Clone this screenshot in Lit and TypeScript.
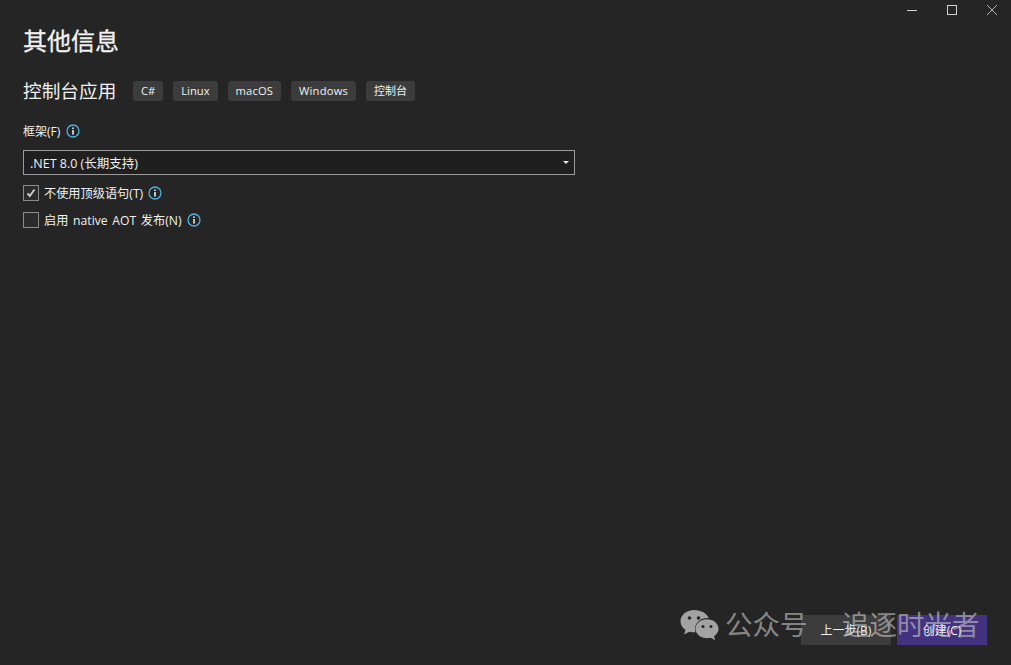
import { LitElement, html, css, svg } from "lit";
import { customElement } from "lit/decorators.js";

const info = html`<svg class="info" width="14" height="14" viewBox="0 0 14 14"><circle cx="7" cy="7" r="6" fill="none" stroke="#4fb3df" stroke-width="1.3"/><rect x="6.2" y="6" width="1.6" height="4.6" fill="#d8eef8"/><rect x="6.2" y="3.4" width="1.6" height="1.6" fill="#d8eef8"/></svg>`;

@customElement("app-root")
export class AppRoot extends LitElement {
  static styles = css`
    :host { display: block; width: 1011px; height: 665px; overflow: hidden; background: #252525; color: #f1f1f1;
      font-family: "Open Sans", "Noto Sans CJK SC", sans-serif; position: relative; }
    .win { display: flex; justify-content: flex-end; height: 20px; }
    .win button { all: unset; width: 40px; height: 20px; display: flex; align-items: center; justify-content: center; }
    .win button.close { margin-right: -1px; }
    .win svg { display: block; }
    .page { padding: 0 0 0 23px; display: flex; flex-direction: column; height: 645px; box-sizing: border-box; }
    h1 { margin: 4px 0 0; font-size: 24px; line-height: 34px; font-weight: 400; height: 34px; -webkit-text-stroke: 0.3px #f1f1f1; }
    .sub { display: flex; align-items: center; margin-top: 23px; height: 20px; }
    h2 { margin: 0 17px 0 0; font-size: 18.67px; font-weight: 400; line-height: 20px; width: 93px; white-space: nowrap; }
    .tags { display: flex; gap: 10px; }
    .tag { height: 20px; box-sizing: border-box; padding: 0 8px; background: #3c3c3c; border-radius: 3px; font-size: 11.2px; line-height: 20px; color: #f1f1f1; white-space: nowrap; }
    .tag.mac { letter-spacing: 0.15px; }
    .tag.wide { letter-spacing: 0.2px; }
    .tag.cjk { font-size: 11px; }
    .label { display: flex; align-items: center; gap: 6px; height: 16px; margin-top: 22px; font-size: 12px; color: #f1f1f1; }
    .select { width: 552px; height: 25px; box-sizing: border-box; margin-top: 11px; border: 1px solid #9a9a9a; background: #1f1f1f; display: flex; align-items: center; justify-content: space-between; padding: 0 5px 0 6px; font-size: 12.5px; color: #f1f1f1; }
    .arrow { width: 0; height: 0; border-left: 3px solid transparent; border-right: 3px solid transparent; border-top: 3px solid #e8e8e8; }
    .check { display: flex; align-items: center; height: 16px; margin-top: 10px; font-size: 12.2px; word-spacing: 1.5px; color: #f1f1f1; }
    .check + .check { margin-top: 11px; }
    .box { width: 16px; height: 16px; box-sizing: border-box; border: 1px solid #8c8c8c; background: #2b2b2b; margin-right: 5px; display: flex; align-items: center; justify-content: center; }
    .check .info { margin-left: 5px; }
    .actions { margin-top: auto; display: flex; justify-content: flex-end; gap: 6px; padding: 0 24px 20px 0; }
    .btn { width: 90px; height: 30px; display: flex; align-items: center; justify-content: center; font-size: 12px; color: #f1f1f1; }
    .back { background: #3c3c3c; }
    .create { background: #43327f; }
    .wm { position: absolute; left: 680px; top: 609px; display: flex; align-items: center; font-size: 27.5px; line-height: 32px; color: rgba(200,200,200,0.62); white-space: nowrap; font-weight: 400; }
    .wm svg { margin-right: 6px; }
    .wm .a { width: 117px; }
  `;

  render() {
    return html`
      <div class="win">
        <button><svg width="12" height="12" viewBox="0 0 12 12"><path d="M1 6.5h10" stroke="#cfcfcf" stroke-width="1"/></svg></button>
        <button><svg width="12" height="12" viewBox="0 0 12 12"><rect x="1.5" y="1.5" width="9" height="9" fill="none" stroke="#cfcfcf" stroke-width="1"/></svg></button>
        <button class="close"><svg width="12" height="12" viewBox="0 0 12 12"><path d="M1 1l10 10M11 1L1 11" stroke="#b8b8b8" stroke-width="1"/></svg></button>
      </div>
      <div class="page">
        <h1>其他信息</h1>
        <div class="sub">
          <h2>控制台应用</h2>
          <div class="tags">
            <span class="tag">C#</span>
            <span class="tag">Linux</span>
            <span class="tag mac">macOS</span>
            <span class="tag wide">Windows</span>
            <span class="tag cjk">控制台</span>
          </div>
        </div>
        <div class="label"><span>框架(F)</span>${info}</div>
        <div class="select"><span>.NET 8.0 (长期支持)</span><span class="arrow"></span></div>
        <div class="check">
          <span class="box"><svg width="12" height="12" viewBox="0 0 12 12"><path d="M2.500 6.500l2.300 2.500L9.500 2.500" fill="none" stroke="#c8c8c8" stroke-width="2"/></svg></span>
          <span>不使用顶级语句(T)</span>${info}
        </div>
        <div class="check">
          <span class="box"></span>
          <span>启用 native AOT 发布(N)</span>${info}
        </div>
        <div class="actions">
          <div class="btn back">上一步(B)</div>
          <div class="btn create">创建(C)</div>
        </div>
      </div>
      <div class="wm">
        <svg width="39" height="32" viewBox="0 0 39 32">
          <path d="M14 1C6.500 1 0.500 6 0.500 12.200c0 3.600 2 6.600 5 8.700L4 25.500l5.400-2.800c1.400.4 2.900.6 4.600.6.600 0 1 0 1.500-.1-.4-1.100-.5-2.200-.5-3.400 0-6 5.500-10.800 12.500-10.800.5 0 .9 0 1.300.1C27.200 4.600 21.200 1 14 1z" fill="#a3a3a3"/>
          <path d="M38.500 19.700c0-5.300-5.200-9.500-11.500-9.500s-11.500 4.200-11.500 9.500 5.200 9.500 11.500 9.500c1.300 0 2.600-.2 3.800-.5l4.400 2.500-1.200-4c2.700-1.800 4.500-4.500 4.500-7.500z" fill="#a3a3a3"/>
          ${svg`<circle cx="9.500" cy="9" r="1.800" fill="#262626"/><circle cx="18.500" cy="9" r="1.800" fill="#262626"/><circle cx="23" cy="17.500" r="1.500" fill="#262626"/><circle cx="31" cy="17.500" r="1.500" fill="#262626"/>`}
        </svg>
        <span class="a">公众号</span><span>追逐时光者</span>
      </div>
    `;
  }
}
